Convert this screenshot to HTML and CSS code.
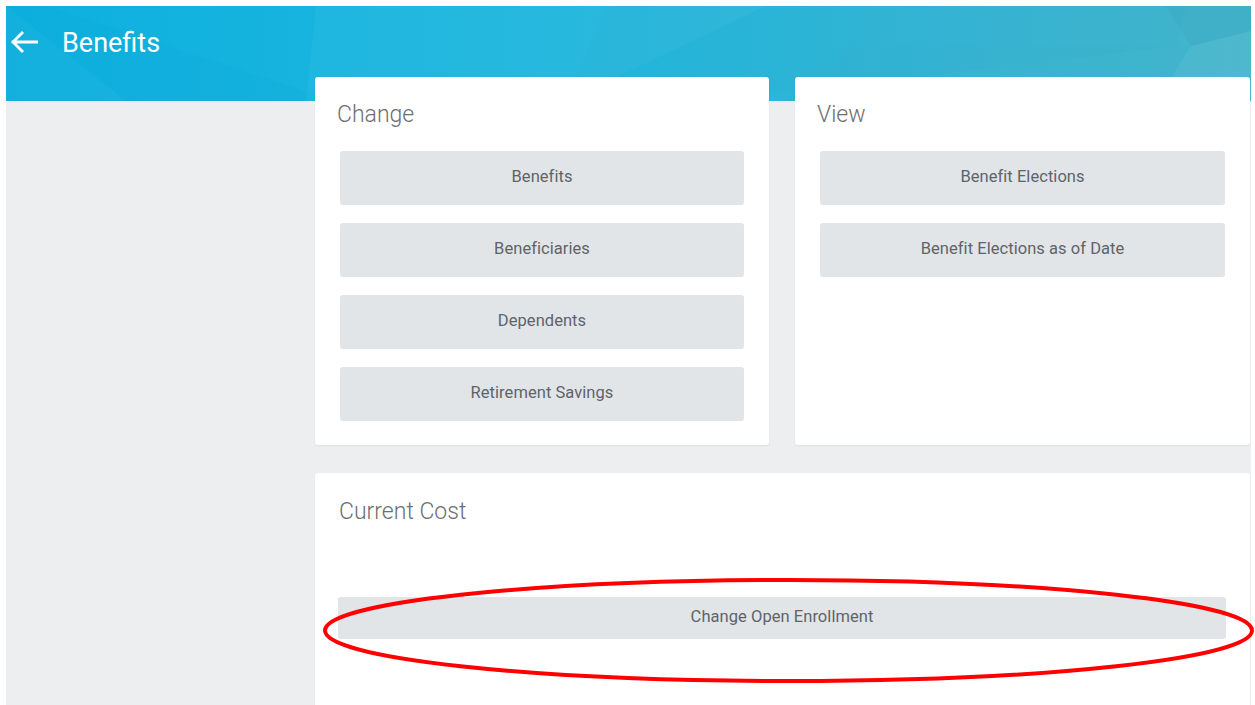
FILE: index.html
```html
<!DOCTYPE html>
<html lang="en">
<head>
<meta charset="utf-8">
<title>Benefits</title>
<link rel="stylesheet" href="styles.css">
</head>
<body>
<div class="frame">
  <header class="topbar">
    <svg class="topbar-art" viewBox="0 0 1245 95" preserveAspectRatio="none" aria-hidden="true">
      <polygon points="0,0 40,0 330,95 0,95" fill="#0a9fd0" opacity="0.10"/>
      <polygon points="0,0 0,95 120,95" fill="#ffffff" opacity="0.03"/>
      <polygon points="310,0 760,0 560,95 300,95" fill="#ffffff" opacity="0.04"/>
      <polygon points="600,0 1180,0 1170,40 700,95 560,95" fill="#2a9fc4" opacity="0.07"/>
      <polygon points="1160,0 1245,0 1245,25 1185,40" fill="#3aa7c0" opacity="0.35"/>
      <polygon points="1185,40 1245,25 1245,95 1150,95" fill="#ffffff" opacity="0.05"/>
      <polygon points="840,40 1185,40 1150,95 780,95" fill="#38a9c4" opacity="0.12"/>
    </svg>
    <button class="back" type="button" aria-label="Back">
      <svg width="28" height="22" viewBox="0 0 28 22" aria-hidden="true">
        <path d="M27 11H3M12 2L3 11l9 9" fill="none" stroke="#fff" stroke-width="2.8" stroke-linecap="square"/>
      </svg>
    </button>
    <h1 class="title">Benefits</h1>
  </header>

  <div class="workspace">
    <aside class="sidebar"></aside>
    <main class="content">
      <section class="card">
        <h2 class="card-title">Change</h2>
        <div class="actions">
          <button class="action" type="button">Benefits</button>
          <button class="action" type="button">Beneficiaries</button>
          <button class="action" type="button">Dependents</button>
          <button class="action" type="button">Retirement Savings</button>
        </div>
      </section>

      <section class="card">
        <h2 class="card-title">View</h2>
        <div class="actions">
          <button class="action" type="button">Benefit Elections</button>
          <button class="action" type="button">Benefit Elections as of Date</button>
        </div>
      </section>

      <section class="card card-wide">
        <h2 class="card-title card-title-wide">Current Cost</h2>
        <button class="action action-slim" type="button">Change Open Enrollment</button>
        <svg class="callout" width="931" height="105" viewBox="0 0 931 105" aria-hidden="true">
          <ellipse cx="465.5" cy="52.5" rx="463.5" ry="50.5" fill="none" stroke="#ff0000" stroke-width="4"/>
        </svg>
      </section>
    </main>
  </div>
</div>
</body>
</html>
```

FILE: styles.css
```css
* {
  box-sizing: border-box;
}

html {
  overflow: hidden;
}

body {
  margin: 0;
  background: #ffffff;
  font-family: Roboto, "Noto Sans", "Liberation Sans", sans-serif;
}

.frame {
  margin: 6px 4px 0 6px;
  min-height: 760px;
  background: #edeef0;
}

/* blue title band */
.topbar {
  position: relative;
  height: 95px;
  display: flex;
  align-items: flex-start;
  padding: 24px 0 0 4px;
  background: linear-gradient(90deg, #0db0df 0%, #18b5de 30%, #22b7dc 50%, #35b5d4 75%, #45b5cb 100%);
  overflow: hidden;
}

.topbar-art {
  position: absolute;
  inset: 0;
  width: 100%;
  height: 100%;
}

.back {
  position: relative;
  margin: 1px 0 0 0;
  padding: 0;
  width: 28px;
  height: 22px;
  border: 0;
  background: none;
  display: flex;
}

.title {
  position: relative;
  margin: -3px 0 0 24px;
  font-size: 27px;
  line-height: 32px;
  font-weight: 400;
  color: #ffffff;
  letter-spacing: 0;
}

.workspace {
  display: flex;
}

.sidebar {
  width: 309px;
  flex: none;
}

.content {
  flex: 1;
  margin-top: -24px;
  padding-right: 1px;
  display: grid;
  grid-template-columns: 454px 455px;
  column-gap: 26px;
  row-gap: 28px;
  align-content: start;
}

.card {
  position: relative;
  background: #ffffff;
  border-radius: 3px;
  box-shadow: 0 1px 2px rgba(0, 0, 0, 0.07);
  padding: 24px 25px 24px;
  display: flex;
  flex-direction: column;
}

.card-title {
  margin: 0 0 22px -3px;
  font-size: 23px;
  line-height: 28px;
  font-weight: 300;
  color: #6d6e70;
}

.actions {
  display: flex;
  flex-direction: column;
  gap: 18px;
}

.action {
  height: 54px;
  border: 0;
  border-radius: 3px;
  background: #e1e5e8;
  font-family: inherit;
  font-size: 16.5px;
  letter-spacing: 0.05px;
  font-weight: 400;
  color: #5f6368;
  text-align: center;
  padding: 0 0 4px;
}

.card-wide {
  grid-column: 1 / -1;
  padding: 25px 24px 80px 23px;
}

.card-title-wide {
  margin: 0 0 71px 1px;
}

.action-slim {
  height: 42px;
}

/* hand-drawn highlight around the enrollment action */
.callout {
  position: absolute;
  left: 8px;
  top: 105px;
  overflow: visible;
  pointer-events: none;
}
```
